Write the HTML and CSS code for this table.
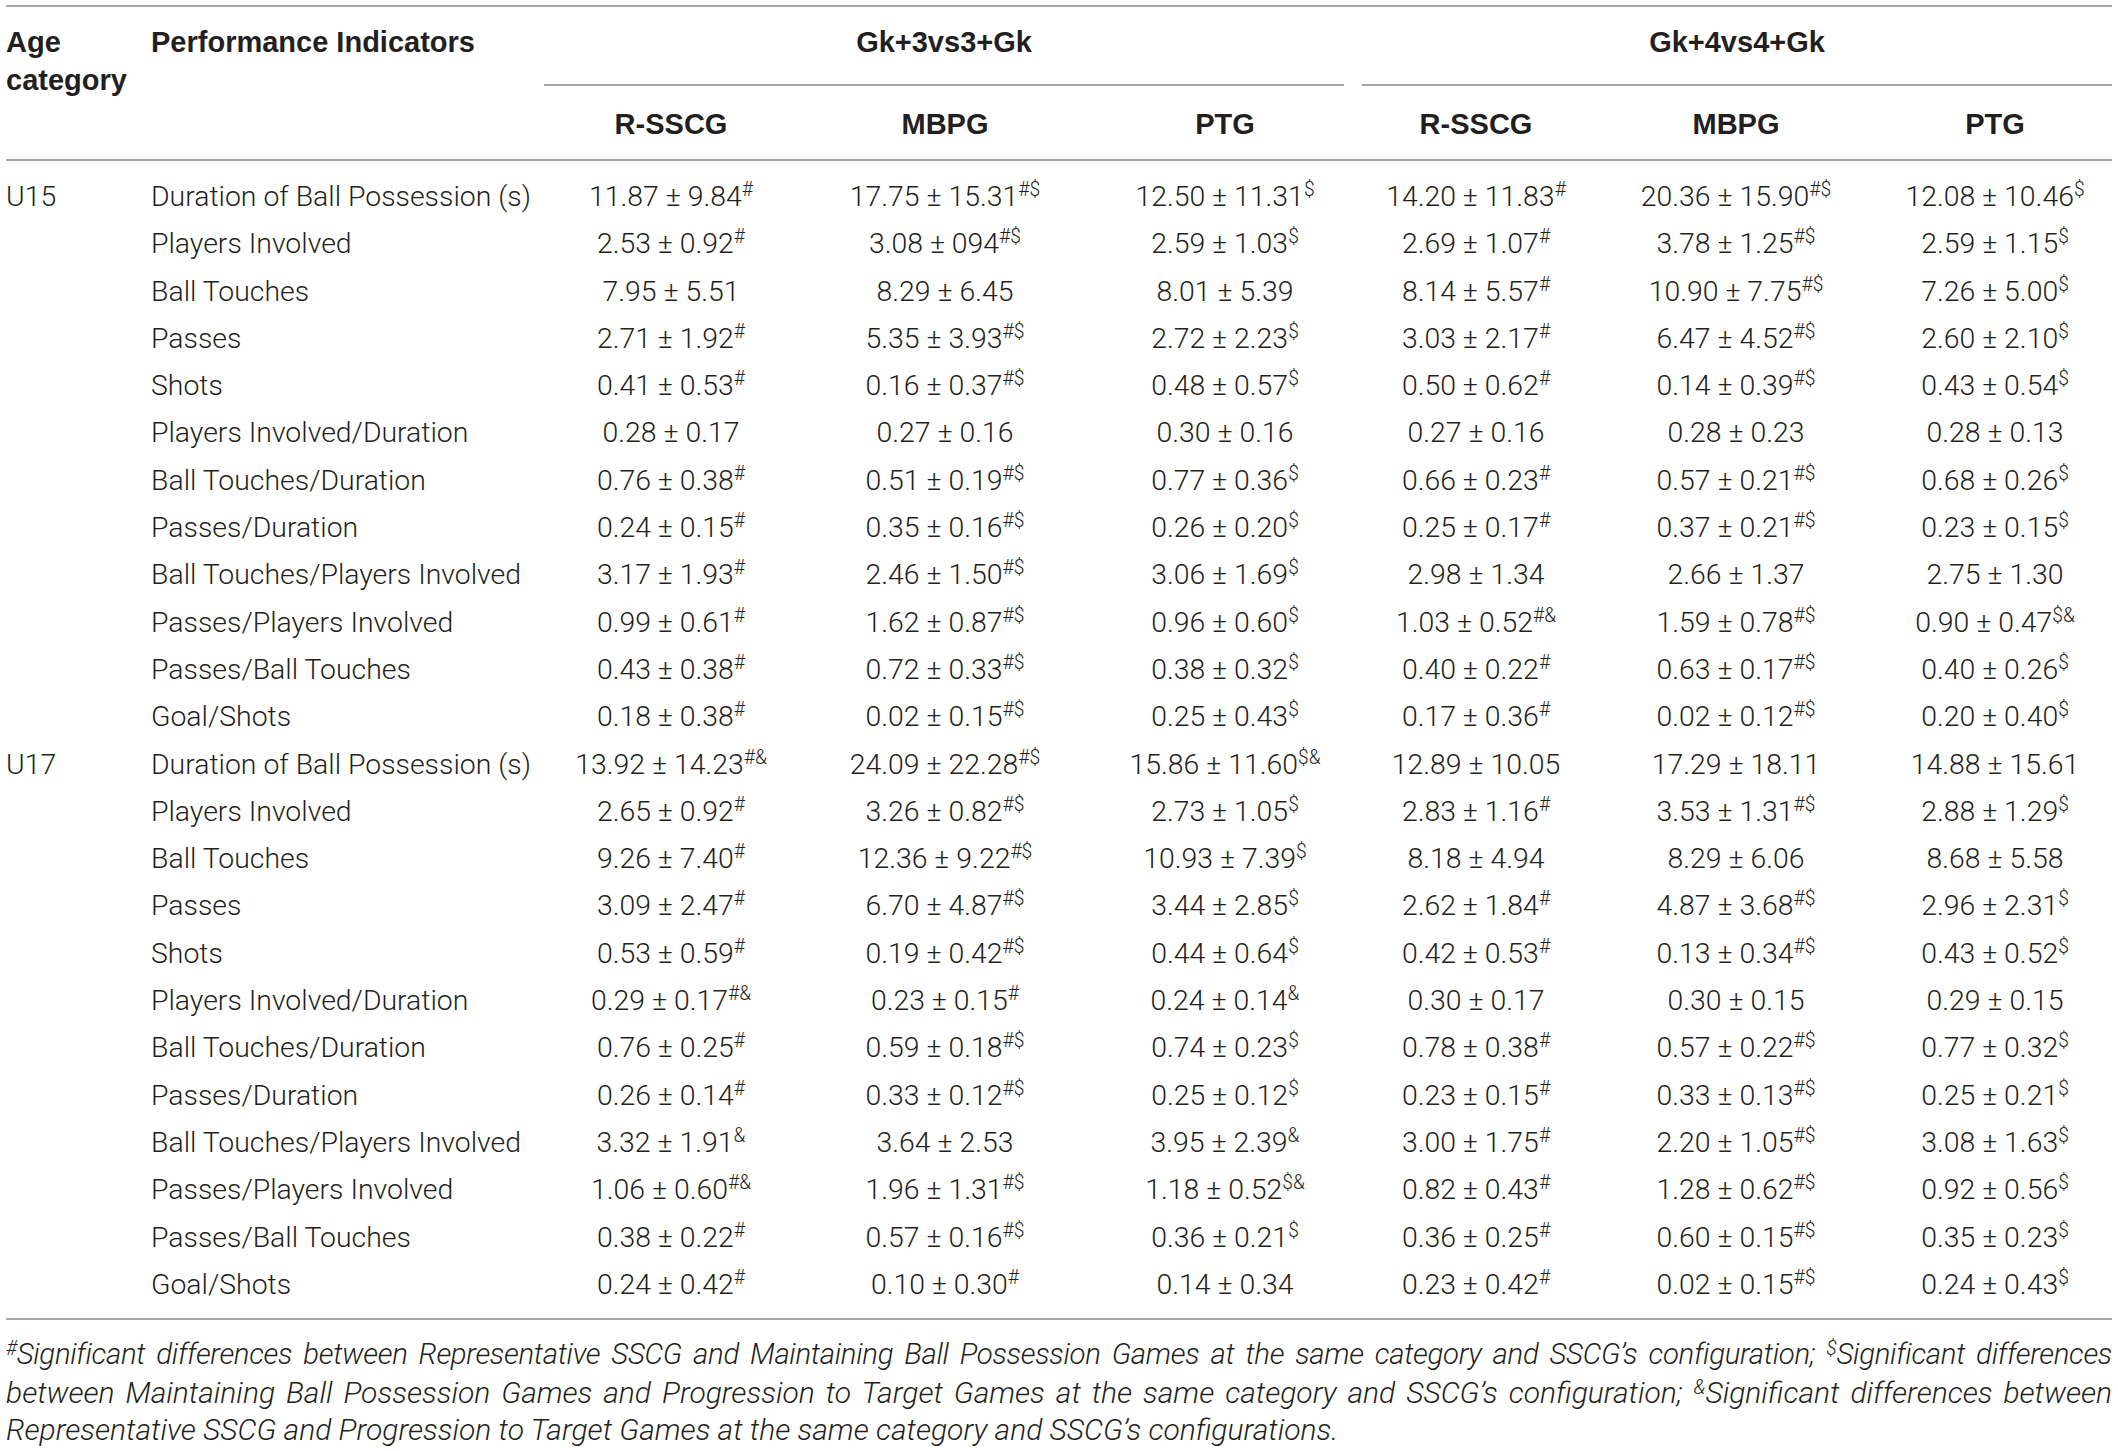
FILE: index.html
```
<!DOCTYPE html>
<html lang="en">
<head>
<meta charset="utf-8">
<title>Table</title>
<link rel="stylesheet" href="styles.css">
</head>
<body>
<div class="wrap">
<table class="data">
<colgroup>
<col class="c-age"><col class="c-ind"><col class="c1"><col class="c2"><col class="c3"><col class="c4"><col class="c5"><col class="c6">
</colgroup>
<thead>
<tr class="hr1">
<th rowspan="2" class="h-left">Age<br>category</th>
<th rowspan="2" class="h-left">Performance Indicators</th>
<th colspan="3" class="grp"><div class="grp-in grp-a">Gk+3vs3+Gk</div></th>
<th colspan="3" class="grp"><div class="grp-in grp-b">Gk+4vs4+Gk</div></th>
</tr>
<tr class="hr2">
<th>R-SSCG</th><th>MBPG</th><th>PTG</th><th>R-SSCG</th><th>MBPG</th><th>PTG</th>
</tr>
</thead>
<tbody>
<tr><td>U15</td><td class="ind">Duration of Ball Possession (s)</td><td>11.87 ± 9.84<sup>#</sup></td><td>17.75 ± 15.31<sup>#$</sup></td><td>12.50 ± 11.31<sup>$</sup></td><td>14.20 ± 11.83<sup>#</sup></td><td>20.36 ± 15.90<sup>#$</sup></td><td>12.08 ± 10.46<sup>$</sup></td></tr>
<tr><td></td><td class="ind">Players Involved</td><td>2.53 ± 0.92<sup>#</sup></td><td>3.08 ± 094<sup>#$</sup></td><td>2.59 ± 1.03<sup>$</sup></td><td>2.69 ± 1.07<sup>#</sup></td><td>3.78 ± 1.25<sup>#$</sup></td><td>2.59 ± 1.15<sup>$</sup></td></tr>
<tr><td></td><td class="ind">Ball Touches</td><td>7.95 ± 5.51</td><td>8.29 ± 6.45</td><td>8.01 ± 5.39</td><td>8.14 ± 5.57<sup>#</sup></td><td>10.90 ± 7.75<sup>#$</sup></td><td>7.26 ± 5.00<sup>$</sup></td></tr>
<tr><td></td><td class="ind">Passes</td><td>2.71 ± 1.92<sup>#</sup></td><td>5.35 ± 3.93<sup>#$</sup></td><td>2.72 ± 2.23<sup>$</sup></td><td>3.03 ± 2.17<sup>#</sup></td><td>6.47 ± 4.52<sup>#$</sup></td><td>2.60 ± 2.10<sup>$</sup></td></tr>
<tr><td></td><td class="ind">Shots</td><td>0.41 ± 0.53<sup>#</sup></td><td>0.16 ± 0.37<sup>#$</sup></td><td>0.48 ± 0.57<sup>$</sup></td><td>0.50 ± 0.62<sup>#</sup></td><td>0.14 ± 0.39<sup>#$</sup></td><td>0.43 ± 0.54<sup>$</sup></td></tr>
<tr><td></td><td class="ind">Players Involved/Duration</td><td>0.28 ± 0.17</td><td>0.27 ± 0.16</td><td>0.30 ± 0.16</td><td>0.27 ± 0.16</td><td>0.28 ± 0.23</td><td>0.28 ± 0.13</td></tr>
<tr><td></td><td class="ind">Ball Touches/Duration</td><td>0.76 ± 0.38<sup>#</sup></td><td>0.51 ± 0.19<sup>#$</sup></td><td>0.77 ± 0.36<sup>$</sup></td><td>0.66 ± 0.23<sup>#</sup></td><td>0.57 ± 0.21<sup>#$</sup></td><td>0.68 ± 0.26<sup>$</sup></td></tr>
<tr><td></td><td class="ind">Passes/Duration</td><td>0.24 ± 0.15<sup>#</sup></td><td>0.35 ± 0.16<sup>#$</sup></td><td>0.26 ± 0.20<sup>$</sup></td><td>0.25 ± 0.17<sup>#</sup></td><td>0.37 ± 0.21<sup>#$</sup></td><td>0.23 ± 0.15<sup>$</sup></td></tr>
<tr><td></td><td class="ind">Ball Touches/Players Involved</td><td>3.17 ± 1.93<sup>#</sup></td><td>2.46 ± 1.50<sup>#$</sup></td><td>3.06 ± 1.69<sup>$</sup></td><td>2.98 ± 1.34</td><td>2.66 ± 1.37</td><td>2.75 ± 1.30</td></tr>
<tr><td></td><td class="ind">Passes/Players Involved</td><td>0.99 ± 0.61<sup>#</sup></td><td>1.62 ± 0.87<sup>#$</sup></td><td>0.96 ± 0.60<sup>$</sup></td><td>1.03 ± 0.52<sup>#&amp;</sup></td><td>1.59 ± 0.78<sup>#$</sup></td><td>0.90 ± 0.47<sup>$&amp;</sup></td></tr>
<tr><td></td><td class="ind">Passes/Ball Touches</td><td>0.43 ± 0.38<sup>#</sup></td><td>0.72 ± 0.33<sup>#$</sup></td><td>0.38 ± 0.32<sup>$</sup></td><td>0.40 ± 0.22<sup>#</sup></td><td>0.63 ± 0.17<sup>#$</sup></td><td>0.40 ± 0.26<sup>$</sup></td></tr>
<tr><td></td><td class="ind">Goal/Shots</td><td>0.18 ± 0.38<sup>#</sup></td><td>0.02 ± 0.15<sup>#$</sup></td><td>0.25 ± 0.43<sup>$</sup></td><td>0.17 ± 0.36<sup>#</sup></td><td>0.02 ± 0.12<sup>#$</sup></td><td>0.20 ± 0.40<sup>$</sup></td></tr>
<tr><td>U17</td><td class="ind">Duration of Ball Possession (s)</td><td>13.92 ± 14.23<sup>#&amp;</sup></td><td>24.09 ± 22.28<sup>#$</sup></td><td>15.86 ± 11.60<sup>$&amp;</sup></td><td>12.89 ± 10.05</td><td>17.29 ± 18.11</td><td>14.88 ± 15.61</td></tr>
<tr><td></td><td class="ind">Players Involved</td><td>2.65 ± 0.92<sup>#</sup></td><td>3.26 ± 0.82<sup>#$</sup></td><td>2.73 ± 1.05<sup>$</sup></td><td>2.83 ± 1.16<sup>#</sup></td><td>3.53 ± 1.31<sup>#$</sup></td><td>2.88 ± 1.29<sup>$</sup></td></tr>
<tr><td></td><td class="ind">Ball Touches</td><td>9.26 ± 7.40<sup>#</sup></td><td>12.36 ± 9.22<sup>#$</sup></td><td>10.93 ± 7.39<sup>$</sup></td><td>8.18 ± 4.94</td><td>8.29 ± 6.06</td><td>8.68 ± 5.58</td></tr>
<tr><td></td><td class="ind">Passes</td><td>3.09 ± 2.47<sup>#</sup></td><td>6.70 ± 4.87<sup>#$</sup></td><td>3.44 ± 2.85<sup>$</sup></td><td>2.62 ± 1.84<sup>#</sup></td><td>4.87 ± 3.68<sup>#$</sup></td><td>2.96 ± 2.31<sup>$</sup></td></tr>
<tr><td></td><td class="ind">Shots</td><td>0.53 ± 0.59<sup>#</sup></td><td>0.19 ± 0.42<sup>#$</sup></td><td>0.44 ± 0.64<sup>$</sup></td><td>0.42 ± 0.53<sup>#</sup></td><td>0.13 ± 0.34<sup>#$</sup></td><td>0.43 ± 0.52<sup>$</sup></td></tr>
<tr><td></td><td class="ind">Players Involved/Duration</td><td>0.29 ± 0.17<sup>#&amp;</sup></td><td>0.23 ± 0.15<sup>#</sup></td><td>0.24 ± 0.14<sup>&amp;</sup></td><td>0.30 ± 0.17</td><td>0.30 ± 0.15</td><td>0.29 ± 0.15</td></tr>
<tr><td></td><td class="ind">Ball Touches/Duration</td><td>0.76 ± 0.25<sup>#</sup></td><td>0.59 ± 0.18<sup>#$</sup></td><td>0.74 ± 0.23<sup>$</sup></td><td>0.78 ± 0.38<sup>#</sup></td><td>0.57 ± 0.22<sup>#$</sup></td><td>0.77 ± 0.32<sup>$</sup></td></tr>
<tr><td></td><td class="ind">Passes/Duration</td><td>0.26 ± 0.14<sup>#</sup></td><td>0.33 ± 0.12<sup>#$</sup></td><td>0.25 ± 0.12<sup>$</sup></td><td>0.23 ± 0.15<sup>#</sup></td><td>0.33 ± 0.13<sup>#$</sup></td><td>0.25 ± 0.21<sup>$</sup></td></tr>
<tr><td></td><td class="ind">Ball Touches/Players Involved</td><td>3.32 ± 1.91<sup>&amp;</sup></td><td>3.64 ± 2.53</td><td>3.95 ± 2.39<sup>&amp;</sup></td><td>3.00 ± 1.75<sup>#</sup></td><td>2.20 ± 1.05<sup>#$</sup></td><td>3.08 ± 1.63<sup>$</sup></td></tr>
<tr><td></td><td class="ind">Passes/Players Involved</td><td>1.06 ± 0.60<sup>#&amp;</sup></td><td>1.96 ± 1.31<sup>#$</sup></td><td>1.18 ± 0.52<sup>$&amp;</sup></td><td>0.82 ± 0.43<sup>#</sup></td><td>1.28 ± 0.62<sup>#$</sup></td><td>0.92 ± 0.56<sup>$</sup></td></tr>
<tr><td></td><td class="ind">Passes/Ball Touches</td><td>0.38 ± 0.22<sup>#</sup></td><td>0.57 ± 0.16<sup>#$</sup></td><td>0.36 ± 0.21<sup>$</sup></td><td>0.36 ± 0.25<sup>#</sup></td><td>0.60 ± 0.15<sup>#$</sup></td><td>0.35 ± 0.23<sup>$</sup></td></tr>
<tr><td></td><td class="ind">Goal/Shots</td><td>0.24 ± 0.42<sup>#</sup></td><td>0.10 ± 0.30<sup>#</sup></td><td>0.14 ± 0.34</td><td>0.23 ± 0.42<sup>#</sup></td><td>0.02 ± 0.15<sup>#$</sup></td><td>0.24 ± 0.43<sup>$</sup></td></tr>
</tbody>
</table>
<div class="foot">
<div class="fl tight"><sup>#</sup>Significant differences between Representative SSCG and Maintaining Ball Possession Games at the same category and SSCG’s configuration; <sup>$</sup>Significant differences</div>
<div class="fl">between Maintaining Ball Possession Games and Progression to Target Games at the same category and SSCG’s configuration; <sup>&amp;</sup>Significant differences between</div>
<div class="fl last">Representative SSCG and Progression to Target Games at the same category and SSCG’s configurations.</div>
</div>
</div>
</body>
</html>
```
FILE: styles.css
```
html, body {
  margin: 0;
  padding: 0;
  background: #ffffff;
}
body {
  color: #231f20;
  font-family: Roboto, "Liberation Sans", sans-serif;
  font-weight: 300;
}
.wrap {
  margin: 5px 0 0 6px;
  width: 2106px;
}
.data {
  width: 2106px;
  table-layout: fixed;
  border-collapse: collapse;
  border-top: 2px solid #a6a6a6;
  border-bottom: 2px solid #a6a6a6;
}
.c-age { width: 145px; }
.c-ind { width: 393px; }
.c1 { width: 254px; }
.c2 { width: 294px; }
.c3 { width: 266px; }
.c4 { width: 236px; }
.c5 { width: 284px; }
.c6 { width: 234px; }

th {
  font-family: "Liberation Sans", Arial, sans-serif;
  font-weight: 700;
  font-size: 29px;
  line-height: 38px;
  padding: 0;
  vertical-align: top;
  color: #231f20;
}
.h-left {
  text-align: left;
  padding-top: 16px;
}
.grp {
  text-align: center;
}
.grp-in {
  padding: 16px 0 23px 0;
  border-bottom: 2px solid #a6a6a6;
}
.grp-a { margin-right: 14px; }
.grp-b { margin-left: 4px; }
.hr2 th {
  text-align: center;
  padding: 19px 0 16px 0;
}

td {
  font-size: 28.4px;
  line-height: 47.3px;
  padding: 0;
  text-align: center;
  white-space: nowrap;
}
td:first-child,
td.ind {
  text-align: left;
}
tbody tr:first-child td {
  border-top: 2px solid #a6a6a6;
  padding-top: 12px;
}
tbody tr:last-child td {
  padding-bottom: 10px;
}
sup {
  font-size: 0.68em;
  line-height: 0;
  vertical-align: 0.5em;
}

.foot {
  margin-top: 16px;
  font-size: 30px;
  font-style: italic;
  line-height: 37.5px;
}
.fl {
  text-align: justify;
  text-align-last: justify;
  white-space: nowrap;
}
.fl.tight {
  font-size: 29.4px;
  letter-spacing: -0.3px;
}
.fl.last {
  text-align-last: left;
}
.foot sup {
  font-size: 0.66em;
  vertical-align: 0.45em;
}
```
